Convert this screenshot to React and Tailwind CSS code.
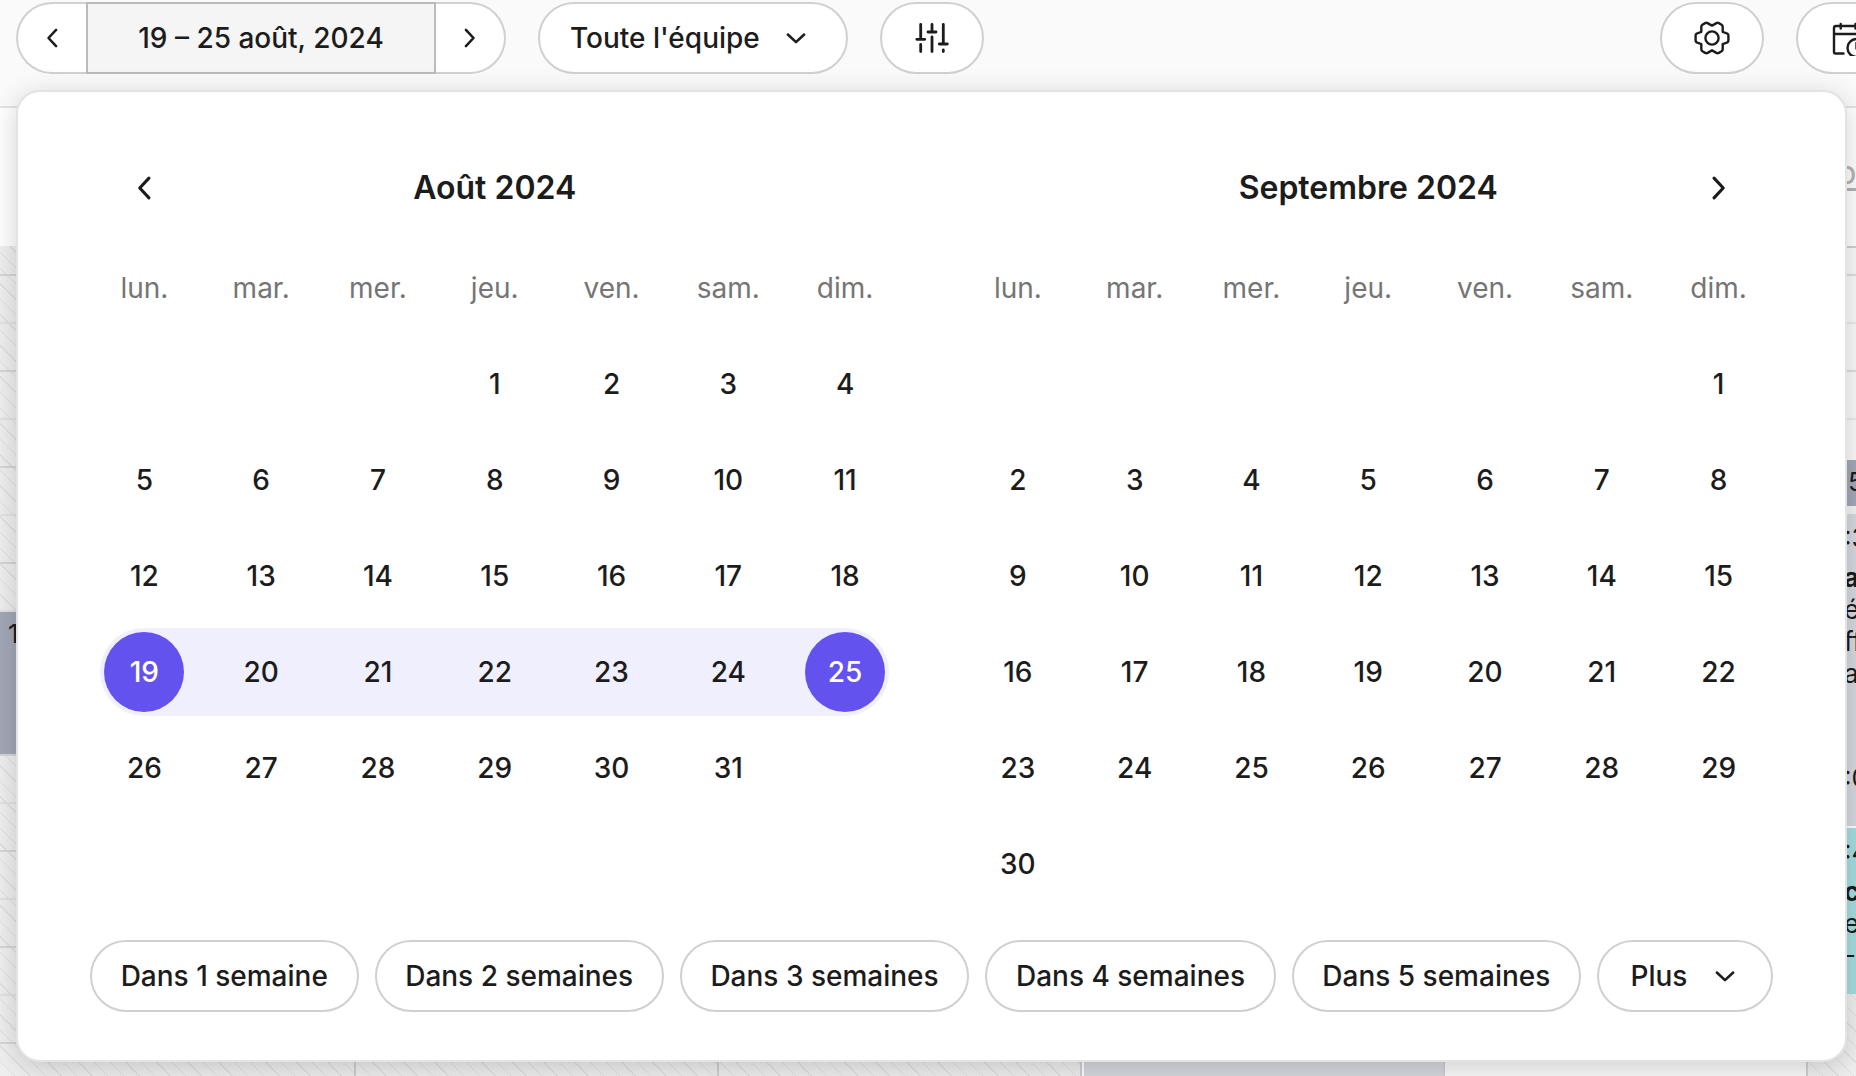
import React from "react";

const WEEKDAYS = ["lun.", "mar.", "mer.", "jeu.", "ven.", "sam.", "dim."];

const PILL =
  "flex h-[72px] items-center justify-center rounded-full border-2 border-[#d0d0d0] bg-white";

const HATCH =
  "bg-[repeating-linear-gradient(45deg,#efefef_0px,#efefef_10px,#dfdfdf_10px,#dfdfdf_11px)]";

function buildWeeks(offset, length) {
  return Array.from({ length: 6 }, (_, week) =>
    Array.from({ length: 7 }, (_, day) => {
      const n = week * 7 + day - offset + 1;
      return n >= 1 && n <= length ? n : null;
    })
  );
}

function Chevron({ direction, small }) {
  const paths = {
    left: "M15.5 5 L9 12 L15.5 19",
    right: "M8.5 5 L15 12 L8.5 19",
    down: "M5 9 L12 15.5 L19 9",
  };
  return (
    <svg
      viewBox="0 0 24 24"
      className={small ? "size-7" : "size-[34px]"}
      fill="none"
      stroke="currentColor"
      strokeWidth="2.2"
      strokeLinecap="round"
      strokeLinejoin="round"
      aria-hidden="true"
    >
      <path d={paths[direction]} />
    </svg>
  );
}

function SlidersIcon() {
  return (
    <svg viewBox="0 0 36 36" className="size-9" fill="none" stroke="currentColor" strokeWidth="2.8" strokeLinecap="round" aria-hidden="true">
      <path d="M6.7 4.5V19M2.8 19.3H10.8M6.7 24.5V31.5" />
      <path d="M18 4.5V11.5M14 12H22M18 17V31.5" />
      <path d="M29.3 4.5V24M25.3 24H33.3M29.3 30V31.5" />
    </svg>
  );
}

function GearIcon() {
  return (
    <svg viewBox="-18 -18 36 36" className="size-9" fill="none" stroke="currentColor" strokeWidth="2.4" strokeLinejoin="round" strokeLinecap="round" aria-hidden="true">
      <path d="M0 -12.4 L4.4 -14.9 Q5.6 -15.5 6.8 -14.9 L9.6 -13.3 Q10.7 -12.6 10.7 -11.3 L10.7 -6.2 L15 -4.5 Q16.4 -4 16.4 -2.6 L16.4 2.6 Q16.4 4 15 4.5 L10.7 6.2 L10.7 11.3 Q10.7 12.6 9.6 13.3 L6.8 14.9 Q5.6 15.5 4.4 14.9 L0 12.4 L-4.4 14.9 Q-5.6 15.5 -6.8 14.9 L-9.6 13.3 Q-10.7 12.6 -10.7 11.3 L-10.7 6.2 L-15 4.5 Q-16.4 4 -16.4 2.6 L-16.4 -2.6 Q-16.4 -4 -15 -4.5 L-10.7 -6.2 L-10.7 -11.3 Q-10.7 -12.6 -9.6 -13.3 L-6.8 -14.9 Q-5.6 -15.5 -4.4 -14.9 Z" />
      <circle r="6.6" />
    </svg>
  );
}

function CalendarClockIcon() {
  return (
    <svg viewBox="0 0 36 36" className="size-9" fill="none" stroke="currentColor" strokeWidth="2.4" strokeLinecap="round" strokeLinejoin="round" aria-hidden="true">
      <path d="M13.500 33.500H5.500Q4 33.500 4 32V8Q4 6 6 6H27.500Q29.500 6 29.500 8V15" />
      <path d="M4.500 14H29M10.700 4V8.500M25.500 4V8.500" />
      <circle cx="26.500" cy="28" r="9" />
      <path d="M26.500 23V28.500H30" />
    </svg>
  );
}

function Toolbar() {
  return (
    <header className="flex h-[108px] items-start gap-8 border-b-2 border-[#e4e4e4] bg-[#fafafa] pt-[2px] pl-4">
      <div className="flex">
        <button type="button" aria-label="Semaine précédente" className="flex h-[72px] w-[70px] items-center justify-center rounded-l-full border-2 border-r-0 border-[#d0d0d0] bg-white">
          <Chevron direction="left" small />
        </button>
        <button type="button" className="h-[72px] w-[350px] border-2 border-[#bbbbbb] bg-[#f5f5f5]">
          19 – 25 août, 2024
        </button>
        <button type="button" aria-label="Semaine suivante" className="flex h-[72px] w-[70px] items-center justify-center rounded-r-full border-2 border-l-0 border-[#d0d0d0] bg-white">
          <Chevron direction="right" small />
        </button>
      </div>
      <div className="grid items-center">
        <select
          aria-label="Équipe"
          className="col-start-1 row-start-1 h-[72px] w-[310px] appearance-none rounded-full border-2 border-[#d0d0d0] bg-white pl-[30px]"
        >
          <option>Toute l'équipe</option>
        </select>
        <span className="pointer-events-none col-start-1 row-start-1 mr-[38px] justify-self-end">
          <Chevron direction="down" small />
        </span>
      </div>
      <button type="button" aria-label="Filtres" className={`${PILL} w-[104px]`}>
        <SlidersIcon />
      </button>
      <button type="button" aria-label="Paramètres" className={`${PILL} ml-auto w-[104px]`}>
        <GearIcon />
      </button>
      <button type="button" aria-label="Disponibilités" className={`${PILL} -mr-[44px] w-[104px] shrink-0`}>
        <CalendarClockIcon />
      </button>
    </header>
  );
}

function HourLines() {
  return (
    <div className="absolute top-[274px] bottom-0 left-0 w-4 bg-[repeating-linear-gradient(180deg,#d6d6d6_0px,#d6d6d6_2px,transparent_2px,transparent_48px,#e2e2e2_48px,#e2e2e2_50px,transparent_50px,transparent_96px)]" />
  );
}

function Schedule() {
  return (
    <div className="flex flex-1 flex-col" aria-hidden="true">
      <div className="flex h-[138px] items-center justify-end bg-white">
        <span className="border-b-[3px] border-[#b4b4b4] text-[24px] leading-6 font-semibold text-[#b4b4b4]">D</span>
      </div>
      <div className="grid flex-1 grid-cols-[356px_repeat(4,363px)_1fr] text-[26px] leading-8 font-normal">
        <div className={`flex flex-col border-r-2 border-[#d0d0d0] ${HATCH}`}>
          <HourLines />
          <div className="relative mt-[366px] h-[142px] bg-[#a3a8b8] pt-[6px] pl-2">1</div>
        </div>
        <div className={`border-r-2 border-[#d0d0d0] ${HATCH}`} />
        <div className={`border-r-2 border-[#d0d0d0] ${HATCH}`} />
        <div className="border-r-2 border-l-2 border-r-[#d0d0d0] border-l-white bg-[#d5d8de]" />
        <div className="border-r-2 border-[#d0d0d0] bg-[#fafafa]" />
        <div className={`flex flex-col whitespace-nowrap ${HATCH}`}>
          <div className="h-[214px] border-t-2 border-[#cdd0d4] bg-[#fafafa]">
            <div className="mt-[26px] h-12 border-t-2 border-[#dedede]" />
            <div className="h-12 border-t-2 border-[#ebebeb]" />
            <div className="h-12 border-t-2 border-[#dedede]" />
            <div className="border-t-2 border-[#ebebeb]" />
          </div>
          <div className="h-[46px] bg-[#a3a8b8] pt-[6px] pl-10">5</div>
          <div className="border-t-8 border-[#f4f4f4]">
            <div className="h-[312px] bg-[#d5d8de] pt-2 pl-9">
              <p>:3</p>
              <p className="pt-2 font-bold">ar</p>
              <p>é</p>
              <p>ff</p>
              <p>a</p>
              <p className="pt-[72px]">:0</p>
            </div>
          </div>
          <div className="border-t-2 border-white">
            <div className="h-[166px] bg-[#a5dde0] pt-2 pl-9">
              <p>:4</p>
              <p className="pt-2 font-bold">c</p>
              <p>e</p>
              <p>-4</p>
            </div>
          </div>
        </div>
      </div>
    </div>
  );
}

function DayCell({ day, range }) {
  if (!day) return <td className="h-24 p-0" />;
  const isStart = range && day === range[0];
  const isEnd = range && day === range[1];
  const inRange = range && day >= range[0] && day <= range[1];
  let band = "flex h-[88px] items-center justify-center";
  if (isStart) band = "ml-[calc(50%-44px)] flex h-[88px] items-center rounded-l-full bg-[#f0effd] pl-1";
  else if (isEnd) band = "mr-[calc(50%-44px)] flex h-[88px] items-center justify-end rounded-r-full bg-[#f0effd] pr-1";
  else if (inRange) band = "flex h-[88px] items-center justify-center bg-[#f0effd]";
  return (
    <td className="h-24 p-0">
      <div className={band}>
        <button
          type="button"
          aria-pressed={Boolean(inRange)}
          className={`size-20 rounded-full ${isStart || isEnd ? "bg-[#6352ee] text-white" : ""}`}
        >
          {day}
        </button>
      </div>
    </td>
  );
}

function Month({ title, offset, length, range, nav }) {
  return (
    <section>
      <div className="grid h-[104px] grid-cols-7 items-center">
        {nav === "prev" ? (
          <button type="button" aria-label="Mois précédent" className="flex justify-center">
            <Chevron direction="left" />
          </button>
        ) : (
          <span />
        )}
        <h2 className="col-span-5 text-center text-[32px] leading-9 font-semibold">{title}</h2>
        {nav === "next" && (
          <button type="button" aria-label="Mois suivant" className="flex justify-center">
            <Chevron direction="right" />
          </button>
        )}
      </div>
      <table className="w-full table-fixed border-collapse" aria-label={title}>
        <thead>
          <tr>
            {WEEKDAYS.map((name) => (
              <th key={name} scope="col" className="h-24 p-0 text-center font-normal text-[#757575]">
                {name}
              </th>
            ))}
          </tr>
        </thead>
        <tbody>
          {buildWeeks(offset, length).map((week, i) => (
            <tr key={i}>
              {week.map((day, j) => (
                <DayCell key={j} day={day} range={range} />
              ))}
            </tr>
          ))}
        </tbody>
      </table>
    </section>
  );
}

function DatePopover() {
  const shortcuts = ["Dans 1 semaine", "Dans 2 semaines", "Dans 3 semaines", "Dans 4 semaines", "Dans 5 semaines"];
  return (
    <div
      role="dialog"
      aria-label="Choisir une période"
      className="absolute top-[90px] right-[9px] left-4 rounded-3xl border-2 border-[#e3e3e3] bg-white px-[68px] pt-11 pb-12 shadow-[0_6px_28px_rgba(0,0,0,0.18)]"
    >
      <div className="grid grid-cols-2 gap-14">
        <Month title="Août 2024" offset={3} length={31} range={[19, 25]} nav="prev" />
        <Month title="Septembre 2024" offset={6} length={30} nav="next" />
      </div>
      <div className="mt-7 flex gap-4 px-1 whitespace-nowrap">
        {shortcuts.map((label) => (
          <button key={label} type="button" className={`${PILL} grow`}>
            {label}
          </button>
        ))}
        <button type="button" aria-haspopup="menu" className={`${PILL} w-[176px] shrink-0 gap-6`}>
          Plus
          <Chevron direction="down" small />
        </button>
      </div>
    </div>
  );
}

export default function App() {
  return (
    <main className="relative flex h-screen flex-col overflow-hidden bg-white font-['Inter',sans-serif] text-[28px] leading-9 font-medium text-[#1c1c1c]">
      <Toolbar />
      <Schedule />
      <DatePopover />
    </main>
  );
}
